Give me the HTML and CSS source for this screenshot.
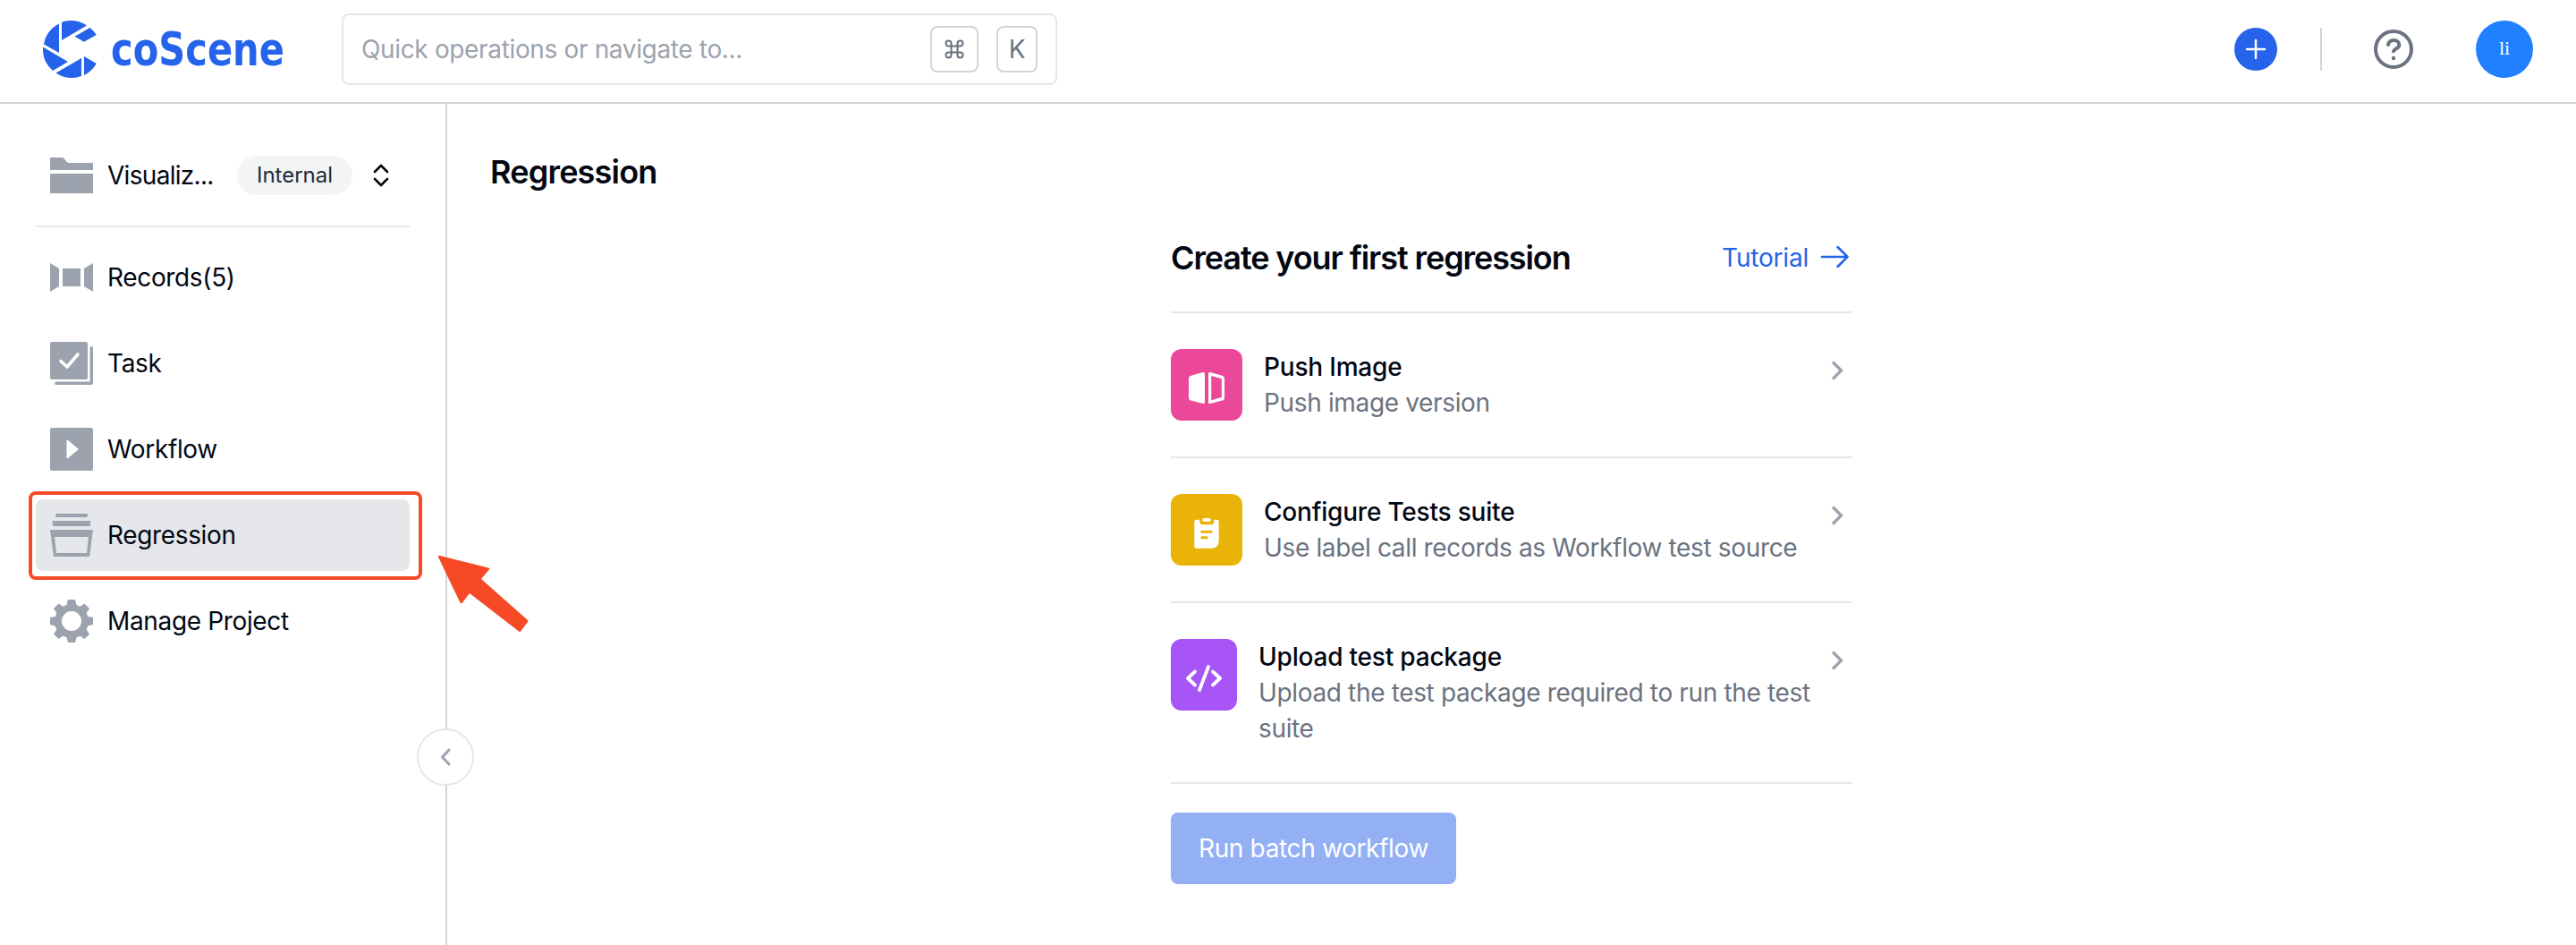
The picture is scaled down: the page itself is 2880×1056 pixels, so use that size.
FILE: index.html
```html
<!DOCTYPE html>
<html lang="en">
<head>
<meta charset="utf-8">
<title>coScene</title>
<link rel="stylesheet" href="styles.css">
</head>
<body>
<header class="topbar">
  <div class="brand">
    <svg class="brand-mark" viewBox="0 0 60 64">
      <g fill="#2563eb">
        <path d="M18 3.5V36L1 26.500A32 32 0 0 1 18 3.500Z"/>
        <path d="M21 1.800A32 32 0 0 1 49 5.500L21 22Z"/>
        <path d="M52.500 8A32 32 0 0 1 59.800 16L46 23.800L35.500 17.800Z"/>
        <path d="M0 29.500L28 46L11 56A32 32 0 0 1 0 29.500Z"/>
        <path d="M14.500 58.500L43 42V62A32 32 0 0 1 14.500 58.500Z"/>
        <path d="M46 40L59.800 48A32 32 0 0 1 46 61Z"/>
      </g>
    </svg>
    <svg class="brand-name" viewBox="0 0 194 42"><text x="0" y="39" textLength="194" lengthAdjust="spacingAndGlyphs">coScene</text></svg>
  </div>
  <div class="search">
    <span class="search-hint">Quick operations or navigate to...</span>
    <kbd class="key key-cmd"><svg viewBox="0 0 24 24" width="24" height="24"><path d="M8.500 8.500h7v7h-7zM8.500 8.500H5.500a3 3 0 1 1 3-3zM15.500 8.500v-3a3 3 0 1 1 3 3zM15.500 15.500h3a3 3 0 1 1-3 3zM8.500 15.500v3a3 3 0 1 1-3-3z"/></svg></kbd>
    <kbd class="key key-k">K</kbd>
  </div>
  <div class="actions">
    <button class="add"><svg viewBox="0 0 48 48" width="48" height="48"><path d="M24 14v20M14 24h20"/></svg></button>
    <span class="split"></span>
    <svg class="help" viewBox="0 0 44 44" width="44" height="44"><circle cx="22" cy="22" r="20"/><path d="M16 17c.6-3 3-5 6.300-5 3.700 0 6 2.200 6 5.200 0 4.300-5.500 4-6.300 7"/><circle class="help-dot" cx="22" cy="32" r="2.200"/></svg>
    <span class="avatar">li</span>
  </div>
</header>
<div class="body">
  <aside class="sidebar">
    <div class="project">
      <svg class="icon" viewBox="0 0 48 48"><path d="M0 4h14c3 1 3 5 7 6h27v8H0zM0 22h48v22H0z"/></svg>
      <span class="project-name">Visualiz...</span>
      <span class="tag">Internal</span>
      <svg class="sorter" viewBox="0 0 18 26" width="18" height="26"><path d="M2 9l7-7 7 7M2 17l7 7 7-7"/></svg>
    </div>
    <nav class="menu">
      <a class="item"><svg class="icon" viewBox="0 0 48 48"><path d="M0 8l10 6v20L0 40zM14 14h20v20H14zM48 8l-10 6v20l10 6z"/></svg>Records(5)</a>
      <a class="item"><svg class="icon" viewBox="0 0 48 48"><rect width="42" height="42" rx="2"/><path d="M46.500 5q1.500 0 1.500 2v39q0 2-2 2H7q-2 0-2-1.500T7 44.500h37.500V7q0-2 2-2z"/><path class="tick" d="M12 21.500l7 6.500 12-14"/></svg>Task</a>
      <a class="item"><svg class="icon" viewBox="0 0 48 48"><path fill-rule="evenodd" d="M2 0h44q2 0 2 2v44q0 2-2 2H2q-2 0-2-2V2Q0 0 2 0zM18.500 14v20H20L32 24 20 14z"/></svg>Workflow</a>
      <a class="item active"><svg class="icon" viewBox="0 0 48 48"><path fill-rule="evenodd" d="M6 0h36l-.5 4h-35zM2.500 8h43l-.8 6H3.300zM0 18h48l-4 30H4zM5 26l2 18h34l2-18z"/></svg>Regression</a>
      <a class="item"><svg class="icon" viewBox="0 0 48 48"><path fill-rule="evenodd" d="M20 0h8l1.500 6 4 1.700L38.500 4.500 44 10l-3.300 5 1.500 4L48 20v8l-5.800 1.500-1.500 4L44 38.500 38.500 44l-5-3.300-4 1.500L28 48h-8l-1.500-5.800-4-1.500L9.500 44 4 38.500l3.300-5-1.500-4L0 28v-8l5.800-1 1.500-4L4 10l5.500-5.500 5 3.200 4-1.700zM24 13a11 11 0 1 0 0 22 11 11 0 0 0 0-22z"/></svg>Manage Project</a>
    </nav>
    <div class="highlight"></div>
    <svg class="pointer" viewBox="0 0 104 88" width="104" height="88"><path d="M1 .8L56 14.500q2 .5 .8 2L48 27l52 46q1 1 0 2l-8 10.500q-1 1-2 0L35 43l-8 10.500q-1.300 1.500-2.500 0L0 2.500q-.5-2 1-1.700z"/></svg>
    <button class="collapse"><svg viewBox="0 0 12 20" width="12" height="20"><path d="M10 2L2.500 10l7.500 8"/></svg></button>
  </aside>
  <main class="content">
    <h1>Regression</h1>
    <section class="guide">
      <div class="guide-head">
        <h2>Create your first regression</h2>
        <a class="tutorial">Tutorial<svg viewBox="0 0 32 24" width="32" height="24"><path d="M2 12h28.500M19.500 1L30.500 12l-11 11"/></svg></a>
      </div>
      <div class="step">
        <span class="tile pink"><svg viewBox="0 0 80 80" width="80" height="80"><path d="M38 27.500v32q0 2-2 1.600L22.500 57.500Q20 57 20 54.500V33q0-2.500 2.500-3.200L36 26q2-.5 2 1.500z"/><path fill-rule="evenodd" d="M42 27.500q0-2 2-1.500l13.500 3.800Q60 30.500 60 33v21.500q0 2.500-2.500 3L44 61.100q-2 .4-2-1.600zM45.200 30v27.300L56.800 54V33.300z"/></svg></span>
        <div class="copy"><h3>Push Image</h3><p>Push image version</p></div>
        <svg class="chevron" viewBox="0 0 14 22" width="14" height="22"><path d="M2 1.500L11.500 11 2 20.500"/></svg>
      </div>
      <div class="step">
        <span class="tile yellow"><svg viewBox="0 0 80 80" width="80" height="80"><path fill-rule="evenodd" d="M28.800 28.700h2.500q1 0 1 1v1.500q0 3 3 3h9.800q3 0 3-3v-1.500q0-1 1-1h2.200q2.400 0 2.400 2.400V52q0 8.700-8.700 8.700H28.800q-2.500 0-2.500-2.500V31.200q0-2.500 2.500-2.500zM34.800 40.700a1.500 1.500 0 0 0 0 3h10.400a1.500 1.500 0 0 0 0-3zM34.800 47.300a1.500 1.500 0 0 0 0 3h5.400a1.500 1.500 0 0 0 0-3z"/><rect x="35.300" y="27" width="9.500" height="3.800" rx="1.900" fill="#fff"/></svg></span>
        <div class="copy"><h3>Configure Tests suite</h3><p>Use label call records as Workflow test source</p></div>
        <svg class="chevron" viewBox="0 0 14 22" width="14" height="22"><path d="M2 1.500L11.500 11 2 20.500"/></svg>
      </div>
      <div class="step">
        <span class="tile purple"><svg viewBox="0 0 74 80" width="74" height="80"><path d="M27 36.500l-8 7.500 8 7.500M47 36.500l8 7.500-8 7.500M42 31L32 57"/></svg></span>
        <div class="copy"><h3>Upload test package</h3><p>Upload the test package required to run the test suite</p></div>
        <svg class="chevron" viewBox="0 0 14 22" width="14" height="22"><path d="M2 1.500L11.500 11 2 20.500"/></svg>
      </div>
      <button class="run">Run batch workflow</button>
    </section>
  </main>
</div>
</body>
</html>
```
FILE: styles.css
```css
* { box-sizing: border-box; }
body { margin: 0; height: 1056px; overflow: hidden; background: #fff; color: #030712; font: 28px/40px Inter, "Liberation Sans", sans-serif; letter-spacing: -0.35px; display: flex; flex-direction: column; }
h1, h2, h3, p { margin: 0; }
button { border: 0; padding: 0; font: inherit; letter-spacing: inherit; }
svg { display: block; flex: none; }
.topbar { height: 116px; flex: none; border-bottom: 2px solid #d1d5db; display: flex; align-items: center; padding: 0 48px; }
.brand { width: 334px; display: flex; align-items: center; gap: 16px; margin-top: -4px; }
.brand-mark { width: 60px; height: 64px; }
.brand-name { width: 194px; height: 42px; overflow: visible; }
.brand-name text { font: 700 52px "DejaVu Sans Condensed", "DejaVu Sans", sans-serif; letter-spacing: 0; fill: #2563eb; }
.search { width: 800px; height: 80px; margin-top: -4px; border: 2px solid #e2e8f0; border-radius: 8px; display: flex; align-items: center; padding: 0 20px; }
.search-hint { color: #9ca3af; flex: 1; }
.key { height: 52px; border: 2px solid #d1d5db; border-radius: 8px; display: grid; place-items: center; font: 28px Inter, sans-serif; color: #6b7280; }
.key-cmd { width: 54px; }
.key-cmd path { fill: none; stroke: #6b7280; stroke-width: 2; }
.key-k { width: 46px; margin-left: 20px; }
.actions { margin-left: auto; display: flex; align-items: center; margin-top: -4px; }
.add { width: 48px; height: 48px; border-radius: 50%; background: #2563eb; }
.add path { stroke: #fff; stroke-width: 2.500; stroke-linecap: round; }
.split { width: 2px; height: 48px; background: #d1d5db; margin-left: 48px; }
.help { margin: 0 70px 0 58px; fill: none; stroke: #6b7280; stroke-width: 4; stroke-linecap: round; }
.help-dot { fill: #6b7280; stroke: none; }
.avatar { width: 64px; height: 64px; padding-bottom: 3px; border-radius: 50%; background: #2080ff; color: #fff; display: grid; place-items: center; font: 22px "Liberation Serif", serif; letter-spacing: 0; }
.body { flex: 1; display: flex; }
.sidebar { position: relative; width: 500px; flex: none; border-right: 2px solid #d1d5db; padding: 40px 40px 0; }
.project { height: 98px; border-bottom: 2px solid #e2e8f0; display: flex; align-items: center; padding: 0 23px 16px 16px; }
.icon { width: 48px; height: 48px; fill: #9ca3af; margin-right: 16px; }
.project-name { width: 121px; margin-right: 24px; white-space: nowrap; letter-spacing: -0.7px; }
.tag { width: 129px; height: 44px; border-radius: 22px; background: #f3f4f6; color: #1f2937; font-size: 24px; line-height: 44px; text-align: center; letter-spacing: 0; }
.sorter { margin-left: auto; }
.sorter path, .collapse path { fill: none; stroke: #030712; stroke-width: 2.600; stroke-linecap: round; stroke-linejoin: round; }
.menu { padding-top: 16px; display: grid; gap: 16px; }
.item { height: 80px; border-radius: 8px; display: flex; align-items: center; padding-left: 16px; }
.active { background: #e5e7eb; }
.icon .tick { fill: none; stroke: #fff; stroke-width: 3.600; stroke-linecap: round; stroke-linejoin: round; }
.highlight { position: absolute; left: 32px; top: 433px; width: 440px; height: 99px; border: 4px solid #f54a25; border-radius: 8px; }
.pointer { position: absolute; left: 490px; top: 504px; fill: #f54a25; z-index: 2; }
.collapse { position: absolute; left: 466px; top: 698px; width: 64px; height: 64px; border: 2px solid #e2e8f0; border-radius: 50%; background: #fff; display: grid; place-items: center; }
.collapse path { stroke: #9ca3af; stroke-width: 3; }
.content { flex: 1; padding: 56px 48px 0; }
h1 { font-size: 36px; line-height: 40px; font-weight: 600; letter-spacing: -0.8px; }
.guide { width: 762px; margin: 52px auto 0; }
.guide-head { height: 86px; border-bottom: 2px solid #e5e7eb; display: flex; justify-content: space-between; }
h2 { font-size: 36px; line-height: 48px; font-weight: 600; letter-spacing: -1.1px; }
.tutorial { color: #2563eb; display: flex; height: 48px; align-items: center; gap: 13px; padding-right: 4px; letter-spacing: -0.2px; }
.tutorial svg { margin-bottom: 2px; }
.tutorial path { fill: none; stroke: #2563eb; stroke-width: 2.600; stroke-linecap: round; stroke-linejoin: round; }
.step { min-height: 162px; border-bottom: 2px solid #e5e7eb; padding: 40px 10px 40px 0; display: flex; }
.tile { width: 80px; height: 80px; flex: none; border-radius: 12px; margin-right: 24px; }
.tile path { fill: #fff; }
.pink { background: #ec4899; }
.yellow { background: #eab308; }
.purple { background: #a855f7; width: 74px; }
.purple path { fill: none; stroke: #fff; stroke-width: 3.800; stroke-linecap: round; stroke-linejoin: round; }
.copy { flex: 1; }
h3 { font-size: 28px; line-height: 40px; font-weight: 500; letter-spacing: -0.2px; }
.copy p { color: #6b7280; }
.chevron { margin-top: 13px; }
.chevron path { fill: none; stroke: #9ca3af; stroke-width: 3.400; }
.run { margin-top: 32px; width: 319px; height: 80px; background: #94b0f5; border-radius: 8px; color: #fff; }
```
